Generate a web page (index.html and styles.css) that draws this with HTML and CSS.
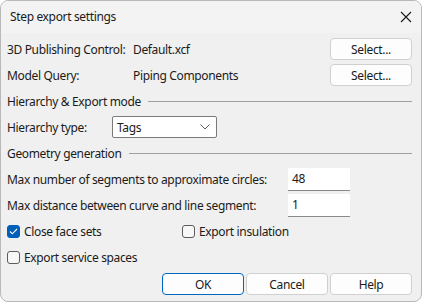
FILE: index.html
```html
<!DOCTYPE html>
<html lang="en">
<head>
    <meta charset="UTF-8">
    <meta name="viewport" content="width=device-width, initial-scale=1.0">
    <title>Step export settings</title>
    <link rel="stylesheet" href="styles.css">
</head>
<body>
    <div class="dialog">
        <div class="title-bar">
            <span class="title">Step export settings</span>
            <span class="close-btn">
                <svg width="12" height="12" viewBox="0 0 12 12"><path d="M1 1L11 11M11 1L1 11" stroke="#1a1a1a" stroke-width="1.1" fill="none"/></svg>
            </span>
        </div>

        <div class="content">
            <div class="row grid-row">
                <span>3D Publishing Control:</span>
                <span>Default.xcf</span>
                <button class="btn">Select...</button>
            </div>
            <div class="row grid-row">
                <span>Model Query:</span>
                <span>Piping Components</span>
                <button class="btn">Select...</button>
            </div>

            <div class="row section">
                <span>Hierarchy &amp; Export mode</span>
                <span class="rule"></span>
            </div>
            <div class="row">
                <span class="label-short">Hierarchy type:</span>
                <div class="combo">
                    <span>Tags</span>
                    <svg width="10" height="6" viewBox="0 0 10 6"><path d="M0.5 0.5L5 5L9.5 0.5" stroke="#606060" stroke-width="1" fill="none"/></svg>
                </div>
            </div>

            <div class="row section">
                <span>Geometry generation</span>
                <span class="rule"></span>
            </div>
            <div class="row">
                <span class="label-long">Max number of segments to approximate circles:</span>
                <div class="text-box">48</div>
            </div>
            <div class="row">
                <span class="label-long">Max distance between curve and line segment:</span>
                <div class="text-box">1</div>
            </div>

            <div class="row">
                <label class="check check-first">
                    <span class="box checked">
                        <svg width="9" height="7" viewBox="0 0 9 7"><path d="M1 3.5L3.3 5.8L8 1" stroke="#ffffff" stroke-width="1.1" fill="none"/></svg>
                    </span>
                    Close face sets
                </label>
                <label class="check">
                    <span class="box"></span>
                    Export insulation
                </label>
            </div>
            <div class="row">
                <label class="check">
                    <span class="box"></span>
                    Export service spaces
                </label>
            </div>

            <div class="row buttons">
                <button class="btn default">OK</button>
                <button class="btn">Cancel</button>
                <button class="btn">Help</button>
            </div>
        </div>
    </div>
</body>
</html>
```

FILE: styles.css
```css
/* General styles */
body {
    margin: 0;
    padding: 0;
    font-family: "Noto Sans", "Open Sans", sans-serif;
    font-size: 12px;
    letter-spacing: -0.35px;
    color: #1b1b1b;
    background-color: #ffffff;
    white-space: nowrap;
}

/* Dialog window */
.dialog {
    width: 420px;
    height: 300px;
    border: 1px solid #b9b9b9;
    border-radius: 8px;
    background-color: #f0f0f0;
    overflow: hidden;
}

.title-bar {
    height: 32px;
    display: flex;
    align-items: center;
    justify-content: space-between;
    padding: 0 9px 0 9px;
    background-color: #f3f3f3;
}

.title {
    font-size: 12px;
    padding-bottom: 1px;
}

.close-btn {
    display: flex;
    margin-top: -1px;
}

.content {
    padding: 3px 9px 0 6px;
}

/* Rows */
.row {
    height: 26px;
    display: flex;
    align-items: center;
}

.grid-row {
    display: grid;
    grid-template-columns: 126px 1fr 82px;
    align-items: center;
}

.section .rule {
    flex: 1;
    height: 1px;
    background-color: #a0a0a0;
    margin-left: 7px;
    margin-top: 1px;
}

.label-short {
    width: 105px;
}

.label-long {
    width: 281px;
}

/* Controls */
.btn {
    height: 22px;
    width: 82px;
    font-family: inherit;
    font-size: 12px;
    letter-spacing: inherit;
    color: #1b1b1b;
    background-color: #fdfdfd;
    border: 1px solid #d0d0d0;
    border-radius: 4px;
    padding: 0;
}

.btn.default {
    border-color: #0067c0;
}

.combo {
    width: 93px;
    height: 20px;
    border: 1px solid #7a7a7a;
    border-radius: 2px;
    background-color: #ffffff;
    display: flex;
    align-items: center;
    justify-content: space-between;
    padding: 0 6px 0 4px;
}

.text-box {
    width: 58px;
    height: 22px;
    line-height: 22px;
    padding-left: 4px;
    background-color: #ffffff;
    border-bottom: 1px solid #8a8a8a;
}

.check {
    display: flex;
    align-items: center;
}

.check-first {
    width: 175px;
}

.box {
    width: 11px;
    height: 11px;
    border: 1px solid #5c5c5c;
    border-radius: 3px;
    background-color: #f7f7f7;
    margin-right: 4px;
    display: flex;
    align-items: center;
    justify-content: center;
}

.box.checked {
    background-color: #005fb8;
    border-color: #005fb8;
}

.buttons {
    justify-content: flex-end;
    gap: 2px;
    margin-top: 1px;
}
```
